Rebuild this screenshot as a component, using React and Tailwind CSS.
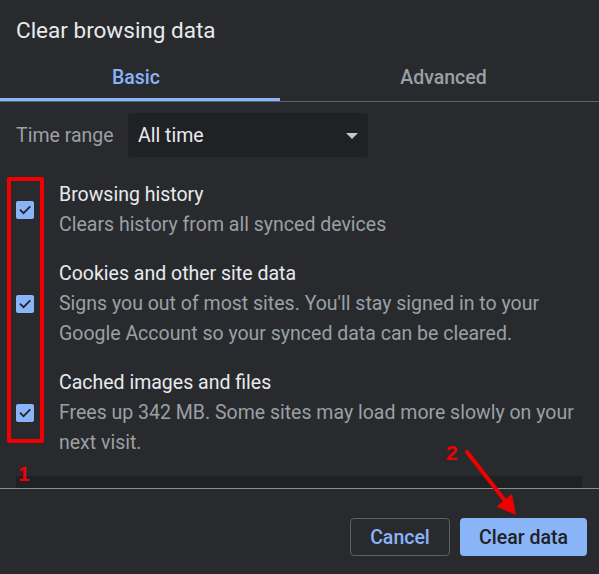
import React from 'react';

const Check = () => (
    <div className="w-[18px] h-[18px] shrink-0 rounded-[2px] bg-[#8ab4f8] flex items-center justify-center">
        <svg width="14" height="14" viewBox="0 0 24 24" fill="none">
            <path d="M4.5 12.5l5 5L20 7" stroke="#202124" strokeWidth="3" strokeLinecap="square" />
        </svg>
    </div>
);

const Row = ({ title, lines }) => (
    <div className="flex items-center pl-4">
        <Check />
        <div className="ml-[25px] leading-[30px] text-[19.5px] whitespace-nowrap">
            <div className="text-[#e8eaed]">{title}</div>
            {lines.map((l) => (
                <div key={l} className="text-[#9aa0a6]">{l}</div>
            ))}
        </div>
    </div>
);

export default function App() {
    return (
        <div className="relative w-[599px] h-[574px] overflow-hidden bg-[#292a2d] font-['Roboto',sans-serif]">
            {/* Header */}
            <div className="h-[55px] pl-4 pt-[15px] text-[22.5px] leading-[30px] text-[#e8eaed]">Clear browsing data</div>

            {/* Tabs */}
            <div className="flex h-[47px] border-b border-[#5f6368] text-[19.5px] font-medium">
                <div className="relative w-[280px] pr-2 flex items-center justify-center text-[#8ab4f8]">
                    Basic
                    <div className="absolute left-0 right-0 bottom-0 h-[3px] bg-[#8ab4f8]"></div>
                </div>
                <div className="flex-1 pl-2 flex items-center justify-center text-[#9aa0a6]">Advanced</div>
            </div>

            {/* Time range */}
            <div className="flex items-center pl-4 mt-[11px] text-[19.5px]">
                <span className="w-[112px] pt-[2px] text-[#9aa0a6]">Time range</span>
                <div className="w-[240px] h-[44px] rounded-[4px] bg-[#202124] flex items-center justify-between pl-[10px] pr-[10px] pt-[2px] text-[#e8eaed]">
                    <span>All time</span>
                    <svg width="12" height="6" viewBox="0 0 12 6">
                        <path d="M0 0h12L6 6z" fill="#c5c7ca" />
                    </svg>
                </div>
            </div>

            {/* Options */}
            <div className="mt-[23px] flex flex-col gap-[19px]">
                <Row title="Browsing history" lines={['Clears history from all synced devices']} />
                <Row
                    title="Cookies and other site data"
                    lines={["Signs you out of most sites. You'll stay signed in to your", 'Google Account so your synced data can be cleared.']}
                />
                <Row
                    title="Cached images and files"
                    lines={['Frees up 342 MB. Some sites may load more slowly on your', 'next visit.']}
                />
            </div>

            {/* Clipped next item */}
            <div className="mt-[18px] ml-4 w-[566px] h-[12px] bg-[#202124]"></div>

            {/* Footer */}
            <div className="border-t border-[#8a8d91] pt-[29px] pr-[12px] flex justify-end gap-[10px] text-[19.5px] font-medium">
                <button className="w-[100px] h-[38px] pt-[2px] rounded-[4px] border border-[#5f6368] text-[#8ab4f8]">Cancel</button>
                <button className="w-[127px] h-[38px] pt-[2px] rounded-[4px] bg-[#8ab4f8] text-[#202124]">Clear data</button>
            </div>

            {/* Annotations */}
            <div className="absolute left-[7px] top-[177px] w-[37px] h-[266px] border-4 border-[#f00000] rounded-[2px]"></div>
            <span className="absolute left-[18px] top-[462px] text-[21px] leading-[24px] font-bold text-[#f00000] font-['Liberation_Sans',sans-serif]">1</span>
            <span className="absolute left-[446px] top-[441px] text-[21px] leading-[24px] font-bold text-[#f00000] font-['Liberation_Sans',sans-serif]">2</span>
            <svg className="absolute left-0 top-0" width="599" height="574" viewBox="0 0 599 574">
                <line x1="467" y1="452" x2="506" y2="502" stroke="#f00000" strokeWidth="4" strokeLinecap="round" />
                <path d="M516 515L496.5 506.5L512 494z" fill="#f00000" />
            </svg>
        </div>
    );
}
